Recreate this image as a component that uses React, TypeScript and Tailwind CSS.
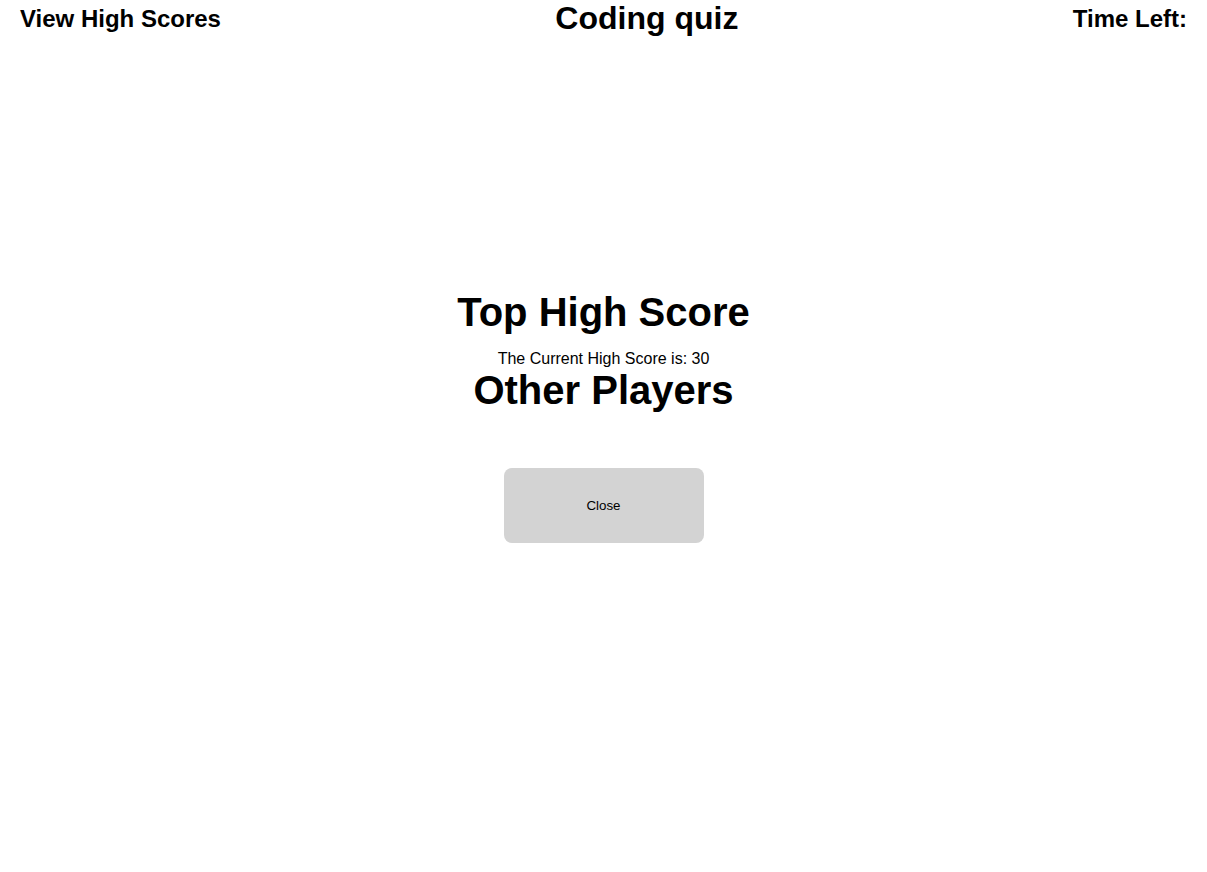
export default function App() {
  return (
    <div className="min-h-screen bg-white text-black font-['Liberation_Sans',Arial,sans-serif]">
      {/* Header */}
      <header className="flex items-center justify-between px-5">
        <h2 className="text-[24px] font-bold leading-[37px]">View High Scores</h2>
        <h1 className="text-[32px] font-bold leading-[37px]">Coding quiz</h1>
        <h2 className="text-[24px] font-bold leading-[37px]">Time Left:</h2>
      </header>

      {/* High scores */}
      <main className="flex flex-col items-center pt-[252px]">
        <h1 className="text-[40px] font-bold leading-[46px]">Top High Score</h1>
        <p className="mt-[17px] text-[16px] leading-[14px]">The Current High Score is: 30</p>
        <h1 className="mt-[1px] text-[40px] font-bold leading-[46px]">Other Players</h1>
        <button className="mt-[55px] h-[75px] w-[200px] rounded-lg bg-[#d3d3d3] text-[13.33px]">
          Close
        </button>
      </main>
    </div>
  );
}
